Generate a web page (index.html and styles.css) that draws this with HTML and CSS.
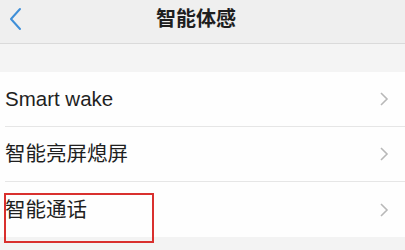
FILE: index.html
```html
<!DOCTYPE html>
<html lang="zh">
<head>
<meta charset="utf-8">
<link rel="stylesheet" href="styles.css">
</head>
<body>
<div class="header">
  <svg class="back" width="14" height="24" viewBox="0 0 14 24"><path d="M12 2 L3 12 L12 22" fill="none" stroke="#3f8fd8" stroke-width="2" stroke-linecap="round" stroke-linejoin="round"/></svg>
  <div class="title">智能体感</div>
</div>
<div class="spacer"></div>
<div class="list">
  <div class="row"><span class="label">Smart wake</span><svg class="chev" width="10" height="14" viewBox="0 0 10 14"><path d="M2 1 L8 7 L2 13" fill="none" stroke="#b8b8b8" stroke-width="1.6"/></svg></div>
  <div class="row"><span class="label">智能亮屏熄屏</span><svg class="chev" width="10" height="14" viewBox="0 0 10 14"><path d="M2 1 L8 7 L2 13" fill="none" stroke="#b8b8b8" stroke-width="1.6"/></svg></div>
  <div class="row last"><span class="label">智能通话</span><svg class="chev" width="10" height="14" viewBox="0 0 10 14"><path d="M2 1 L8 7 L2 13" fill="none" stroke="#b8b8b8" stroke-width="1.6"/></svg><div class="highlight"></div></div>
</div>
</body>
</html>
```
FILE: styles.css
```css
html, body {
  margin: 0;
  padding: 0;
}
body {
  width: 405px;
  height: 250px;
  overflow: hidden;
  background: #f3f3f3;
  font-family: "Liberation Sans", "Noto Sans CJK SC", sans-serif;
  color: #222;
}
.header {
  position: relative;
  height: 43px;
  background: #efefef;
  border-bottom: 1px solid #dadada;
  display: flex;
  align-items: center;
  justify-content: center;
}
.back {
  position: absolute;
  left: 8px;
  top: 7px;
}
.title {
  font-family: "Noto Sans CJK SC", sans-serif;
  font-weight: bold;
  font-size: 20px;
  line-height: 24px;
  margin-top: -8px;
  margin-right: 13px;
  color: #1e1e1e;
}
.spacer {
  height: 28px;
  background: #f4f4f4;
}
.list {
  background: #fefefe;
}
.row {
  position: relative;
  margin-left: 5px;
  height: 54px;
  border-bottom: 1px solid #e6e6e6;
  display: flex;
  align-items: center;
  justify-content: space-between;
  padding-right: 16px;
}
.row.last {
  height: 55px;
  border-bottom: none;
}
.label {
  font-size: 20.5px;
  line-height: 24px;
  color: #1f1f1f;
}
.chev {
  display: block;
}
.highlight {
  position: absolute;
  left: -1px;
  top: 11px;
  width: 150px;
  height: 50px;
  box-sizing: border-box;
  border: 2px solid #d9302e;
}
```
